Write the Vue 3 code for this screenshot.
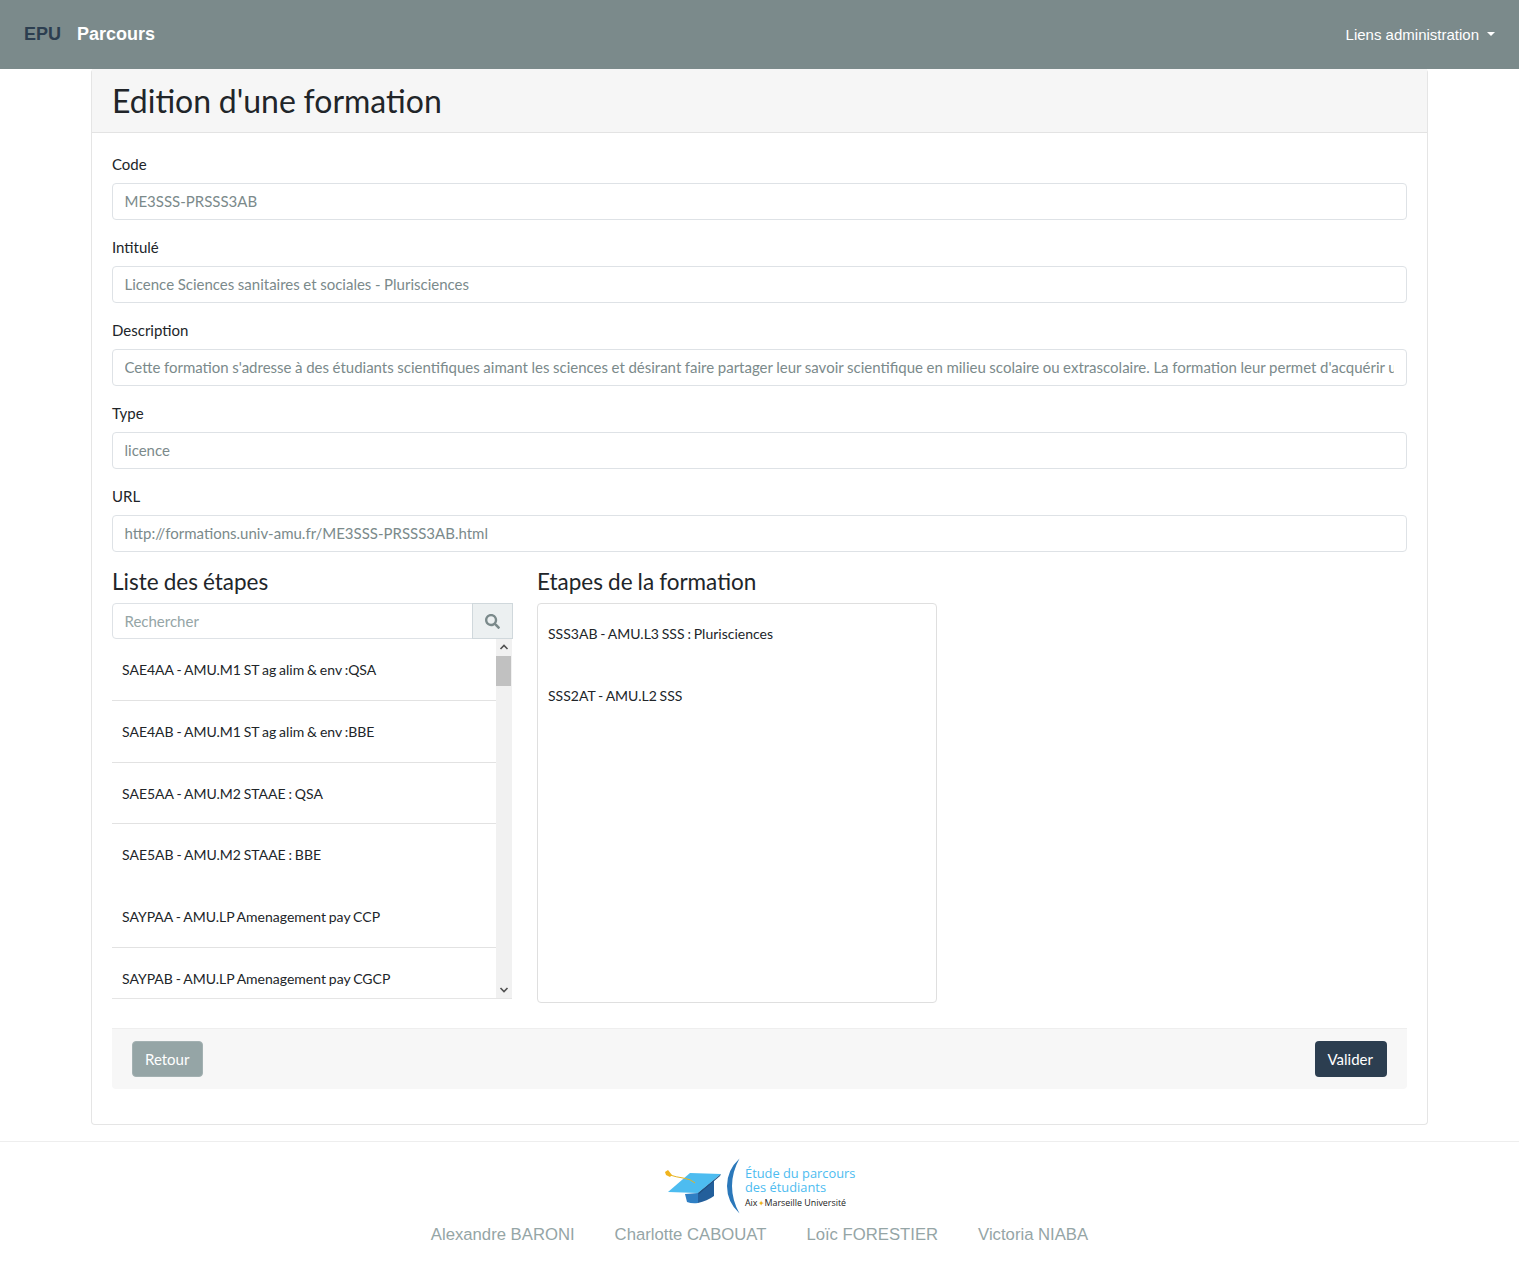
<script setup>
import { ref } from 'vue'

const fields = ref([
  { label: 'Code', value: 'ME3SSS-PRSSS3AB' },
  { label: 'Intitulé', value: 'Licence Sciences sanitaires et sociales - Plurisciences' },
  { label: 'Description', value: "Cette formation s'adresse à des étudiants scientifiques aimant les sciences et désirant faire partager leur savoir scientifique en milieu scolaire ou extrascolaire. La formation leur permet d'acquérir une solide culture scientifique" },
  { label: 'Type', value: 'licence' },
  { label: 'URL', value: 'http://formations.univ-amu.fr/ME3SSS-PRSSS3AB.html' }
])

const etapes = ref([
  { name: 'SAE4AA - AMU.M1 ST ag alim & env :QSA', line: true },
  { name: 'SAE4AB - AMU.M1 ST ag alim & env :BBE', line: true },
  { name: 'SAE5AA - AMU.M2 STAAE : QSA', line: true },
  { name: 'SAE5AB - AMU.M2 STAAE : BBE', line: false },
  { name: 'SAYPAA - AMU.LP Amenagement pay CCP', line: true },
  { name: 'SAYPAB - AMU.LP Amenagement pay CGCP', line: true }
])

const selected = ref(['SSS3AB - AMU.L3 SSS : Plurisciences', 'SSS2AT - AMU.L2 SSS'])
const authors = ['Alexandre BARONI', 'Charlotte CABOUAT', 'Loïc FORESTIER', 'Victoria NIABA']
</script>

<template>
  <div class="page">
    <nav class="navbar">
      <span class="brand">EPU</span>
      <span class="nav-title">Parcours</span>
      <span class="nav-menu">Liens administration<i class="caret"></i></span>
    </nav>

    <main class="card">
      <header class="card-header">
        <h1>Edition d'une formation</h1>
      </header>
      <div class="card-body">
        <div v-for="f in fields" :key="f.label" class="form-group">
          <label>{{ f.label }}</label>
          <input class="form-control" type="text" readonly :value="f.value" />
        </div>

        <div class="columns">
          <section class="col">
            <h4>Liste des étapes</h4>
            <div class="search">
              <input class="search-input" type="text" placeholder="Rechercher" />
              <span class="search-btn">
                <svg width="15" height="15" viewBox="0 0 512 512" fill="#7b8a8b">
                  <path d="M505 442.7 405.3 343c-4.5-4.5-10.6-7-17-7H372c27.6-35.3 44-79.7 44-128C416 93.1 322.9 0 208 0S0 93.1 0 208s93.1 208 208 208c48.3 0 92.7-16.4 128-44v16.3c0 6.4 2.5 12.5 7 17l99.7 99.7c9.4 9.4 24.6 9.4 33.9 0l28.3-28.3c9.4-9.4 9.4-24.6.1-34zM208 336c-70.7 0-128-57.2-128-128 0-70.7 57.2-128 128-128 70.7 0 128 57.2 128 128 0 70.7-57.2 128-128 128z" />
                </svg>
              </span>
            </div>
            <div class="list-wrap">
              <ul class="list">
                <li v-for="e in etapes" :key="e.name" :class="{ noline: !e.line }">{{ e.name }}</li>
              </ul>
              <div class="scrollbar">
                <svg class="arrow" width="16" height="17" viewBox="0 0 16 17"><path d="M4.5 10 8 6.5 11.5 10" fill="none" stroke="#505050" stroke-width="1.6" /></svg>
                <div class="thumb"></div>
                <div class="track"></div>
                <svg class="arrow" width="16" height="17" viewBox="0 0 16 17"><path d="M4.5 7 8 10.5 11.5 7" fill="none" stroke="#505050" stroke-width="1.6" /></svg>
              </div>
            </div>
          </section>

          <section class="col">
            <h4>Etapes de la formation</h4>
            <ul class="selected">
              <li v-for="s in selected" :key="s">{{ s }}</li>
            </ul>
          </section>
        </div>

        <div class="actions">
          <button class="btn btn-back" type="button">Retour</button>
          <button class="btn btn-ok" type="button">Valider</button>
        </div>
      </div>
    </main>

    <footer class="footer">
      <div class="logo">
        <svg width="57" height="36" viewBox="0 0 57 36">
          <path d="M20 25 L33 24 L33 34 Q27 35 22 33 Z" fill="#2f7fc4" />
          <path d="M33 24 L49 11 L49 27 Q42 32 33 34 Z" fill="#235f9b" />
          <path d="M3 23 L25 4 L56 5 L33 24 Z" fill="#4dbcf0" />
          <path d="M33 24 L56 5 L55 7 L34 25 Z" fill="#1f4f80" />
          <path d="M5 6 Q11 8 18 9 Q26 10 30 14" fill="none" stroke="#e6b422" stroke-width="1" />
          <path d="M0 3 L3 1 L7 6 L5 8 L1 6 Z" fill="#f0b41e" />
        </svg>
        <svg class="paren" width="13" height="56" viewBox="0 0 13 56">
          <path d="M12.500 0.500 Q0 12 0 28 Q0 44 12.500 55.500 Q5 42 5 28 Q5 14 12.500 0.500 Z" fill="#2b78ba" />
        </svg>
        <div class="logo-text">
          <p class="logo-line">Étude du parcours<br />des étudiants</p>
          <span class="logo-amu">Aix<b>✦</b>Marseille Université</span>
        </div>
      </div>
      <div class="authors">
        <span v-for="a in authors" :key="a">{{ a }}</span>
      </div>
    </footer>
  </div>
</template>

<style>
body {
  background: #fff;
}
</style>

<style scoped>
.page {
  font-family: Lato, "Liberation Sans", sans-serif;
  font-size: 15px;
  line-height: 1.5;
  color: #212529;
  height: 1263px;
  overflow: hidden;
}
.navbar {
  height: 69px;
  box-sizing: border-box;
  background: #7b8a8b;
  display: flex;
  align-items: center;
  padding: 0 24px;
  font-family: "Liberation Sans", Arial, sans-serif;
}
.brand {
  color: #2c3e50;
  font-size: 18px;
  font-weight: bold;
  margin-right: 16px;
}
.nav-title {
  color: #fff;
  font-size: 18px;
  font-weight: bold;
}
.nav-menu {
  margin-left: auto;
  color: #fff;
  font-size: 15px;
  display: flex;
  align-items: center;
  padding-top: 2px;
}
.caret {
  width: 0;
  height: 0;
  margin-left: 8px;
  border-top: 4px solid #fff;
  border-left: 4px solid transparent;
  border-right: 4px solid transparent;
  margin-bottom: 4px;
}
.card {
  width: 1337px;
  box-sizing: border-box;
  margin: 0 auto;
  border: 1px solid #e5e5e5;
  border-top: none;
  border-radius: 4px;
  height: 1056px;
}
.card-header {
  height: 64px;
  box-sizing: border-box;
  background: #f6f6f6;
  border-bottom: 1px solid #e3e3e3;
  padding: 2px 20px 0;
  display: flex;
  align-items: center;
}
h1 {
  margin: 0;
  font-size: 32px;
  font-weight: 400;
  line-height: 1.2;
  word-spacing: -0.5px;
}
.card-body {
  padding: 20px;
}
.form-group {
  margin-bottom: 16px;
}
label {
  display: block;
  margin-bottom: 7.5px;
}
.form-control,
.search-input {
  display: block;
  width: 100%;
  height: 37px;
  box-sizing: border-box;
  padding: 5px 12px 7px 11.5px;
  font-family: inherit;
  font-size: 15px;
  line-height: 1.5;
  color: #7b8a8b;
  word-spacing: -0.25px;
  border: 1px solid #dee2e6;
  border-radius: 4px;
  outline: none;
  background: #fff;
}
.columns {
  display: flex;
  gap: 25px;
}
.col {
  width: 400px;
}
h4 {
  margin: 0 0 8px;
  font-size: 22.5px;
  font-weight: 400;
  line-height: 1.2;
  word-spacing: -0.7px;
}
.search {
  display: flex;
  width: 401px;
}
.search-input {
  flex: 1;
  width: auto;
  min-width: 0;
  height: 36px;
  padding-top: 6px;
  padding-bottom: 6px;
  border-radius: 4px 0 0 4px;
}
.search-input::placeholder {
  color: #95a5a6;
  opacity: 1;
}
.search-btn {
  width: 41px;
  height: 36px;
  box-sizing: border-box;
  background: #ecf0f1;
  border: 1px solid #d0d8dc;
  margin-left: -1px;
  display: flex;
  align-items: center;
  justify-content: center;
}
.list-wrap {
  display: flex;
  height: 360px;
  border-bottom: 1px solid #e5e5e5;
  box-sizing: border-box;
}
.list {
  list-style: none;
  margin: 0;
  padding: 0;
  flex: 1;
  overflow: hidden;
  font-size: 14px;
  color: #212529;
  word-spacing: -0.75px;
}
.list li {
  height: 61.8px;
  box-sizing: border-box;
  padding: 20px 10px;
  line-height: 21px;
  border-bottom: 1px solid #e2e2e2;
}
.list li.noline {
  border-bottom-color: transparent;
}
.scrollbar {
  width: 16px;
  background: #f1f1f1;
  display: flex;
  flex-direction: column;
}
.arrow {
  display: block;
  flex: none;
}
.thumb {
  height: 30px;
  width: 15px;
  background: #c1c1c1;
  flex: none;
}
.track {
  flex: 1;
}
.selected {
  list-style: none;
  margin: 0;
  padding: 0;
  height: 400px;
  box-sizing: border-box;
  border: 1px solid #dfdfdf;
  border-radius: 4px;
  font-size: 14px;
  word-spacing: -0.75px;
}
.selected li {
  height: 62px;
  box-sizing: border-box;
  padding: 19px 10px;
  line-height: 21px;
}
.actions {
  margin-top: 25px;
  height: 61px;
  box-sizing: border-box;
  background: #f7f7f7;
  border-top: 1px solid #eee;
  border-radius: 0 0 4px 4px;
  padding: 12px 20px;
  display: flex;
  justify-content: space-between;
}
.btn {
  height: 36px;
  padding: 6px 13px 5px 12px;
  font-family: inherit;
  font-size: 15px;
  line-height: 1.5;
  color: #fff;
  border: 1px solid transparent;
  border-radius: 4px;
}
.btn-back {
  background: #95a5a6;
  border-color: #a3b1b2;
}
.btn-ok {
  background: #2c3e50;
}
.footer {
  margin-top: 16px;
  border-top: 1px solid #eeeeee;
  display: flex;
  flex-direction: column;
  align-items: center;
}
.logo {
  display: flex;
  align-items: center;
  height: 56px;
  margin-top: 16px;
  margin-left: 2px;
  width: 191px;
}
.logo svg {
  display: block;
  flex: none;
}
.logo > svg:first-child {
  margin-top: 2px;
}
.paren {
  margin-left: 5px;
}
.logo-text {
  margin-left: 5px;
  display: flex;
  flex-direction: column;
  font-family: "Open Sans", sans-serif;
  white-space: nowrap;
  position: relative;
  top: 1px;
}
.logo-line {
  margin: 0;
  color: #4dbcf0;
  font-size: 12.85px;
  line-height: 14px;
}
.logo-amu {
  margin-top: 3px;
  font-size: 8.9px;
  line-height: 12px;
  color: #222;
}
.logo-amu b {
  color: #f0b41e;
  font-size: 8px;
  font-weight: normal;
}
.authors {
  display: flex;
  gap: 40px;
  margin-top: 8px;
  font-family: "Liberation Sans", Arial, sans-serif;
  font-size: 16.7px;
  color: #95a5a6;
  line-height: 26px;
}
</style>
